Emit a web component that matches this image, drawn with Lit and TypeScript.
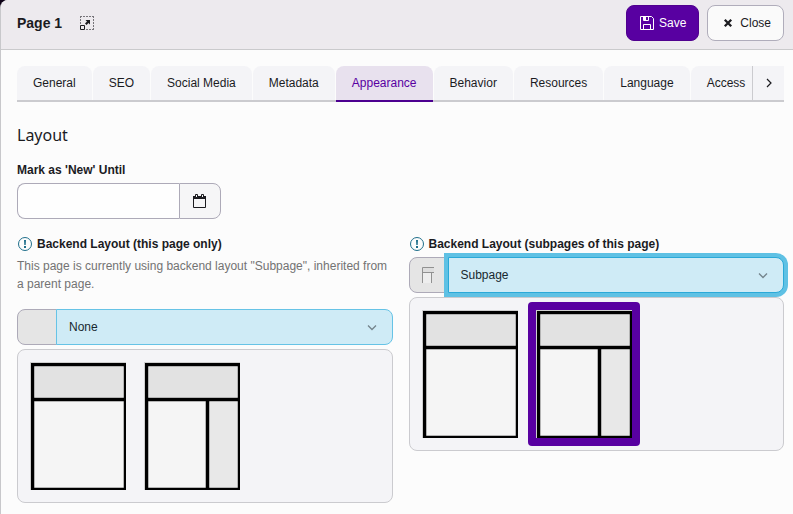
import { LitElement, html, css, svg, nothing } from "lit";
import { customElement, property, state } from "lit/decorators.js";
import { classMap } from "lit/directives/class-map.js";

interface LayoutOption {
  label: string;
  sidebar: boolean;
}

const OPTIONS: LayoutOption[] = [
  { label: "Default", sidebar: false },
  { label: "Subpage", sidebar: true },
];

const TABS = [
  "General",
  "SEO",
  "Social Media",
  "Metadata",
  "Appearance",
  "Behavior",
  "Resources",
  "Language",
  "Access",
];

@customElement("layout-thumb")
export class LayoutThumb extends LitElement {
  @property({ type: Boolean }) sidebar = false;

  static styles = css`
    :host {
      display: block;
    }
    .thumb {
      display: block;
    }
  `;

  private cell(x: number, y: number, w: number, h: number, fill: string) {
    return svg`
      <rect x=${x} y=${y} width=${w} height=${h} rx="1" fill="#b4b4b4"></rect>
      <rect x=${x + 1} y=${y + 1} width=${w - 2} height=${h - 2} fill=${fill}></rect>`;
  }

  render() {
    return html`
      <svg class="thumb" width="96" height="128" viewBox="0 0 96 128" aria-hidden="true">
        <rect width="96" height="128" fill="#cfcfcf"></rect>
        <rect x="1" y="1" width="95" height="127" fill="#000"></rect>
        ${this.cell(4, 4, 90, 32, "#e2e2e2")}
        ${this.sidebar
          ? [this.cell(4, 39, 58, 87, "#f5f5f5"), this.cell(65, 39, 29, 87, "#e8e8e8")]
          : this.cell(4, 39, 90, 87, "#f5f5f5")}
      </svg>
    `;
  }
}

@customElement("layout-field")
export class LayoutField extends LitElement {
  @property() label = "";
  @property() hint = "";
  @property() value = "None";
  @property({ type: Boolean }) active = false;

  static styles = css`
    :host {
      display: block;
      min-width: 0;
    }
    .label {
      display: flex;
      align-items: center;
      gap: 4px;
      height: 18px;
      margin-bottom: 4px;
      font-weight: 700;
    }
    .label svg {
      flex: none;
    }
    .hint {
      margin: 0 0 16px;
      color: #737373;
    }
    .group {
      display: flex;
      height: 36px;
    }
    .prefix {
      flex: none;
      box-sizing: border-box;
      width: 40px;
      display: flex;
      align-items: center;
      justify-content: center;
      background: #e5e5e5;
      border: 1px solid #adaab8;
      border-radius: 8px 0 0 8px;
    }
    .control {
      flex: 1;
      min-width: 0;
      display: grid;
      align-items: center;
      margin-left: -1px;
    }
    .control > * {
      grid-area: 1 / 1;
    }
    .select {
      appearance: none;
      box-sizing: border-box;
      width: 100%;
      height: 36px;
      margin: 0;
      padding: 0 36px 0 12px;
      font: inherit;
      color: #17282f;
      background: #cfebf6;
      border: 1px solid #66c3e6;
      border-radius: 0 8px 8px 0;
      outline: none;
    }
    .select.active {
      border-color: #2ba9d8;
      box-shadow: 0 0 0 4px #5fc1e4;
    }
    .arrow {
      justify-self: end;
      margin-right: 15px;
      pointer-events: none;
    }
    .panel {
      display: flex;
      gap: 2px;
      margin-top: 4px;
      padding: 4px;
      background: #f4f4f7;
      border: 1px solid #cbcbcf;
      border-radius: 8px;
    }
    .choice {
      display: block;
      margin: 0;
      padding: 8px;
      background: none;
      border: 0;
      border-radius: 4px;
      cursor: pointer;
    }
    .choice.selected {
      background: #5800a1;
    }
  `;

  render() {
    return html`
      <label class="label" for="select">
        <svg width="16" height="16" viewBox="0 0 16 16" aria-hidden="true">
          <circle cx="8" cy="8" r="6.5" fill="none" stroke="#1f6f8b" />
          <path d="M7 4h2l-.3 5H7.3zM7 10h2v2H7z" fill="#1f6f8b" />
        </svg>
        ${this.label}
      </label>
      ${this.hint ? html`<p class="hint">${this.hint}</p>` : nothing}
      <div class="group">
        <span class="prefix">
          ${this.value === "Subpage"
            ? html`<svg width="14" height="16" viewBox="0 0 14 16" aria-hidden="true">
                <path d="M1 1h11v4H1z" fill="#dedede" />
                <path d="M1 6h8v10H1z" fill="#eeeeee" />
                <path d="M.5 16V.5H12M1 5.5h11M9.5 6v10" fill="none" stroke="#919191" />
              </svg>`
            : nothing}
        </span>
        <span class="control">
          <select
            id="select"
            class=${classMap({ select: true, active: this.active })}
            .value=${this.value}
            @change=${(e: Event) => (this.value = (e.target as HTMLSelectElement).value)}
          >
            <option ?selected=${this.value === "None"}>None</option>
            ${OPTIONS.map(
              (o) => html`<option ?selected=${o.label === this.value}>${o.label}</option>`
            )}
          </select>
          <svg class="arrow" width="12" height="12" viewBox="0 0 12 12" aria-hidden="true">
            <path d="M2 4.5l4 4 4-4" fill="none" stroke="#74848c" stroke-width="1.3" />
          </svg>
        </span>
      </div>
      <div class="panel">
        ${OPTIONS.map(
          (o) => html`<button
            type="button"
            class=${classMap({ choice: true, selected: o.label === this.value })}
            aria-label=${o.label}
            @click=${() => (this.value = o.label)}
          >
            <layout-thumb ?sidebar=${o.sidebar}></layout-thumb>
          </button>`
        )}
      </div>
    `;
  }
}

@customElement("app-root")
export class AppRoot extends LitElement {
  @state() private tab = "Appearance";

  static styles = css`
    :host {
      display: block;
      min-height: 100vh;
      background: #0d0016;
      font: 12px/18px "Liberation Sans", Arial, sans-serif;
      color: #1b1b1f;
    }
    .modal {
      box-sizing: border-box;
      min-height: 100vh;
      border-left: 1px solid #c8c8cb;
      border-top-left-radius: 8px;
      background: #fcfcfc;
      overflow: hidden;
    }
    .header {
      display: flex;
      align-items: center;
      gap: 8px;
      padding: 5px 9px 8px 16px;
      background: #edeaee;
      border-bottom: 1px solid #cacacc;
    }
    .title {
      margin: 0;
      font-size: 14px;
      font-weight: 700;
    }
    .expand {
      display: flex;
      margin: 0 auto 0 10px;
      padding: 0;
      border: 0;
      background: none;
      color: inherit;
    }
    .button {
      display: flex;
      align-items: center;
      gap: 4px;
      box-sizing: border-box;
      height: 36px;
      padding: 0 12px;
      font: inherit;
      color: #1b1b1f;
      background: #fafafa;
      border: 1px solid #b0adbb;
      border-radius: 8px;
    }
    .button.primary {
      color: #fff;
      background: #5800a1;
      border-color: #50008f;
    }
    .body {
      padding: 16px 9px 11px 16px;
    }
    .tabbar {
      display: flex;
      border-bottom: 2px solid #cbcbcf;
      height: 34px;
    }
    .tabs {
      display: flex;
      gap: 1px;
      flex: 1;
      min-width: 0;
      height: 36px;
      overflow: hidden;
    }
    .tab {
      flex: none;
      box-sizing: border-box;
      height: 34px;
      margin: 0;
      padding: 0 16px;
      font: inherit;
      color: inherit;
      background: #f4f4f7;
      border: 0;
      border-radius: 8px 8px 0 0;
    }
    .tab.active {
      height: 36px;
      color: #5800a1;
      background: #e8e1ee;
      border-bottom: 2px solid #4c0090;
    }
    .next {
      flex: none;
      display: flex;
      align-items: center;
      justify-content: center;
      box-sizing: border-box;
      width: 32px;
      padding: 0;
      color: inherit;
      background: #f4f4f7;
      border: 0;
      border-left: 1px solid #cbcbcf;
    }
    .heading {
      margin: 20px 0 13px;
      font: 400 16px/26px "Noto Sans", sans-serif;
    }
    .label {
      display: block;
      margin-bottom: 4px;
      font-weight: 700;
    }
    .date {
      display: flex;
      height: 36px;
      width: 204px;
      margin-bottom: 16px;
    }
    .date-input {
      box-sizing: border-box;
      flex: 1;
      min-width: 0;
      padding: 0 12px;
      font: inherit;
      background: #fefefe;
      border: 1px solid #adaab8;
      border-right: 0;
      border-radius: 8px 0 0 8px;
    }
    .date-button {
      display: flex;
      align-items: center;
      justify-content: center;
      box-sizing: border-box;
      width: 42px;
      padding: 0;
      color: #1b1b1f;
      background: #f6f6f7;
      border: 1px solid #adaab8;
      border-radius: 0 8px 8px 0;
    }
    .columns {
      display: grid;
      grid-template-columns: 1fr 1fr;
      gap: 16px;
      align-items: start;
    }
  `;

  render() {
    return html`
      <main class="modal">
        <header class="header">
          <h1 class="title">Page 1</h1>
          <button class="expand" type="button" aria-label="Expand">
            <svg width="14" height="14" viewBox="0 0 14 14">
              <path
                d="M0 .5h14M.5 0v8M13.5 0v14M6 13.5h8"
                fill="none"
                stroke="#77757a"
                stroke-dasharray="2 1"
              />
              <path d="M.5 9.500h4v4h-4z" fill="none" stroke="#1b1b1f" />
              <path d="M5.500 4H10v4.500L8.500 7 6.500 9 5 7.500l2-2z" fill="#1b1b1f" />
            </svg>
          </button>
          <button class="button primary" type="button">
            <svg width="16" height="16" viewBox="0 0 16 16" aria-hidden="true">
              <path
                d="M1.500 1.500h11l2 2v11h-13zM4.500 14.500v-5h7v5M4.500 1.500v4h5v-4"
                fill="none"
                stroke="#fff"
              />
              <path d="M5 2h2v3H5z" fill="#fff" />
            </svg>
            Save
          </button>
          <button class="button" type="button">
            <svg width="16" height="16" viewBox="0 0 16 16" aria-hidden="true">
              <path d="M4.800 4.800l6.400 6.400M11.200 4.800l-6.400 6.400" stroke="#1b1b1f" stroke-width="2.300" />
            </svg>
            Close
          </button>
        </header>
        <section class="body">
          <nav class="tabbar">
            <div class="tabs" role="tablist">
              ${TABS.map(
                (t) => html`<button
                  type="button"
                  role="tab"
                  class=${classMap({ tab: true, active: t === this.tab })}
                  aria-selected=${t === this.tab}
                  @click=${() => (this.tab = t)}
                >
                  ${t}
                </button>`
              )}
            </div>
            <button class="next" type="button" aria-label="More tabs">
              <svg width="12" height="12" viewBox="0 0 12 12">
                <path d="M4 2l4 4-4 4" fill="none" stroke="#1b1b1f" stroke-width="1.200" />
              </svg>
            </button>
          </nav>
          <h2 class="heading">Layout</h2>
          <label class="label" for="until">Mark as 'New' Until</label>
          <div class="date">
            <input class="date-input" id="until" type="text" />
            <button class="date-button" type="button" aria-label="Pick a date">
              <svg width="16" height="16" viewBox="0 0 16 16">
                <path d="M1.500 5v9.500h12V5" fill="none" stroke="currentColor" />
                <path d="M1 3h13v3H1z" fill="currentColor" />
                <path d="M3.500 1.500h2v3h-2zM9.500 1.500h2v3h-2z" fill="#f6f6f7" stroke="currentColor" />
              </svg>
            </button>
          </div>
          <div class="columns">
            <layout-field
              label="Backend Layout (this page only)"
              hint='This page is currently using backend layout "Subpage", inherited from a parent page.'
            ></layout-field>
            <layout-field
              label="Backend Layout (subpages of this page)"
              value="Subpage"
              active
            ></layout-field>
          </div>
        </section>
      </main>
    `;
  }
}
